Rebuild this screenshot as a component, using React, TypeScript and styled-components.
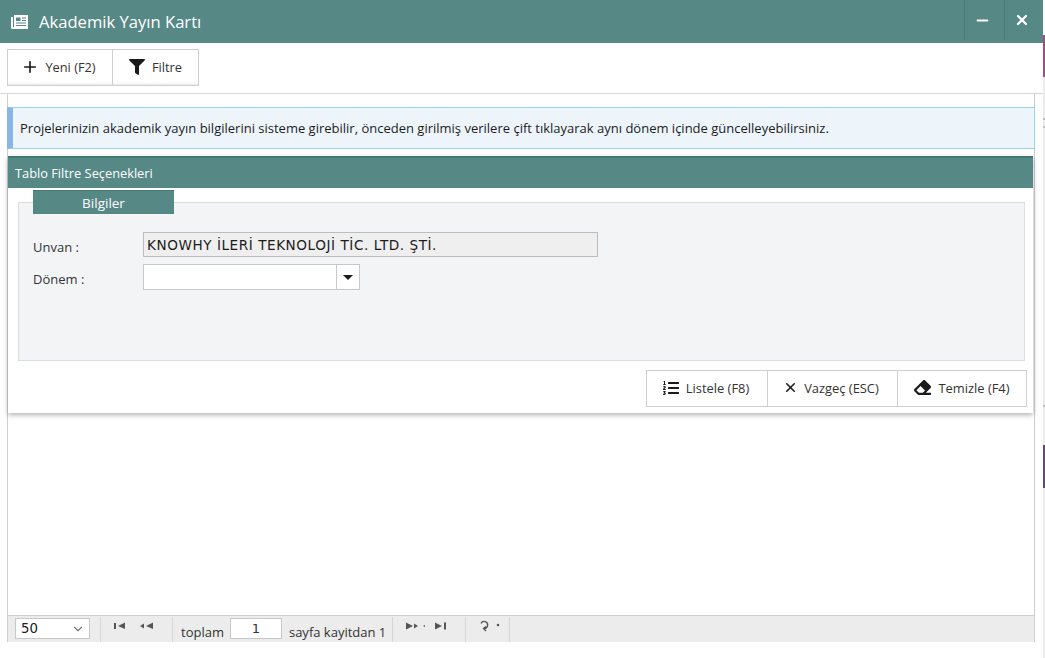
import React from 'react';
import styled, { createGlobalStyle } from 'styled-components';
import { ChevronDown, Minus, Plus, X } from 'lucide-react';
import { FaEraser, FaFilter, FaListOl } from 'react-icons/fa';

const GlobalStyle = createGlobalStyle`
  html, body {
    margin: 0;
    padding: 0;
    background: #fff;
  }
  body {
    font-family: "Open Sans", "Noto Sans", sans-serif;
    color: #222;
  }
  * {
    box-sizing: border-box;
  }
`;

const Page = styled.div`
  width: 1045px;
  height: 658px;
  display: flex;
  overflow: hidden;
  background: #fff;
`;

const Dialog = styled.div`
  width: 1043px;
  height: 658px;
  display: flex;
  flex-direction: column;
`;

const BackdropStrip = styled.div`
  width: 2px;
  height: 658px;
  padding-top: 35px;
`;

const StripSegment = styled.div<{ $color: string; $height: number }>`
  height: ${(p) => p.$height}px;
  background: ${(p) => p.$color};
`;

const TitleBar = styled.header`
  height: 43px;
  flex: none;
  display: flex;
  align-items: stretch;
  justify-content: space-between;
  background: #568886;
  color: #fff;
`;

const TitleGroup = styled.div`
  display: flex;
  align-items: center;
  gap: 11px;
  padding-left: 11px;
  font-size: 16.6px;
`;

const WindowControls = styled.div`
  display: flex;
  height: 40px;
`;

const WindowButton = styled.div<{ $width: number }>`
  width: ${(p) => p.$width}px;
  padding-right: 5px;
  display: flex;
  align-items: center;
  justify-content: center;
  border-left: 1px solid #4c7b79;
`;

const Toolbar = styled.div`
  height: 51px;
  flex: none;
  padding: 6px 0 0 7px;
  border-bottom: 1px solid #d6d6d6;
`;

const ButtonGroup = styled.div`
  display: inline-flex;
  height: 37px;
  border: 1px solid #cfcfcf;
  box-shadow: inset 0 -3px 3px -2px #e6e6e6;
`;

const ToolButton = styled.div<{ $width: number; $gap: number; $nudge: number }>`
  width: ${(p) => p.$width}px;
  padding: 0 ${(p) => p.$nudge}px 2px 0;
  display: flex;
  align-items: center;
  justify-content: center;
  gap: ${(p) => p.$gap}px;
  font-size: 12.8px;
  color: #333;
  & + & {
    border-left: 1px solid #cfcfcf;
  }
`;

const Content = styled.main`
  flex: none;
  height: 548px;
  width: 1028px;
  margin-left: 7px;
  padding-top: 13px;
  border-left: 1px solid #d0d0d0;
  border-right: 1px solid #cdcdcd;
  display: flex;
  flex-direction: column;
`;

const InfoBox = styled.div`
  height: 42px;
  margin-left: -1px;
  display: flex;
  align-items: center;
  padding-left: 7px;
  width: 1028px;
  background: #edf5fb;
  border: 1px solid #93d9e8;
  border-left: 6px solid #8ab6e6;
  font-size: 13px;
  color: #1c1c1c;
`;

const FilterPanel = styled.section`
  width: 1025px;
  height: 257px;
  margin-top: 7px;
  flex: none;
  display: flex;
  flex-direction: column;
  background: #fff;
  box-shadow: 0 2px 5px rgba(0, 0, 0, 0.3);
`;

const PanelHeader = styled.div`
  height: 32px;
  flex: none;
  display: flex;
  align-items: center;
  padding-left: 7px;
  background: #568886;
  border-top: 2px solid #3f7a78;
  color: #fff;
  font-size: 12.8px;
`;

const PanelBody = styled.div`
  flex: 1;
  padding: 2px 8px 0 10px;
  display: flex;
  flex-direction: column;
`;

const LegendTab = styled.div`
  width: 141px;
  height: 24px;
  margin-left: 15px;
  position: relative;
  z-index: 1;
  display: flex;
  align-items: center;
  justify-content: center;
  background: #568886;
  border-top: 1px solid #3f7a78;
  color: #fff;
  font-size: 13.5px;
`;

const FieldGroup = styled.div`
  width: 1007px;
  height: 159px;
  margin-top: -12px;
  padding: 29px 0 0 14px;
  background: #f3f4f6;
  border: 1px solid #dcdcdc;
  display: flex;
  flex-direction: column;
  gap: 7px;
`;

const FieldRow = styled.div`
  display: flex;
  align-items: center;
`;

const FieldLabel = styled.label`
  width: 110px;
  padding-top: 4px;
  font-size: 13px;
  color: #333;
`;

const ReadonlyValue = styled.div`
  width: 455px;
  height: 25px;
  padding-left: 3px;
  display: flex;
  align-items: center;
  background: #efefef;
  border: 1px solid #bdbdbd;
  font-family: "DejaVu Sans", sans-serif;
  font-size: 13.6px;
  letter-spacing: 0.55px;
  color: #1c1c1c;
`;

const SelectBox = styled.div`
  width: 217px;
  height: 26px;
  display: flex;
  justify-content: flex-end;
  background: #fff;
  border: 1px solid #c8c8c8;
`;

const SelectArrow = styled.div`
  width: 23px;
  display: flex;
  align-items: center;
  justify-content: center;
  border-left: 1px solid #c8c8c8;
  &::after {
    content: '';
    border-left: 5px solid transparent;
    border-right: 5px solid transparent;
    border-top: 5px solid #1a1a1a;
  }
`;

const ActionBar = styled.div`
  margin-top: 9px;
  display: flex;
  justify-content: flex-end;
  margin-right: -2px;
`;

const ActionGroup = styled.div`
  display: flex;
  height: 37px;
  border: 1px solid #cfcfcf;
`;

const ActionButton = styled.div<{ $width: number; $gap: number; $nudge: number }>`
  width: ${(p) => p.$width}px;
  padding: 0 ${(p) => p.$nudge}px 2px 0;
  display: flex;
  align-items: center;
  justify-content: center;
  gap: ${(p) => p.$gap}px;
  font-size: 12.9px;
  color: #333;
  & + & {
    border-left: 1px solid #cfcfcf;
  }
`;

const Spacer = styled.div`
  flex: 1;
`;

const Pager = styled.footer`
  height: 27px;
  flex: none;
  display: flex;
  background: #ececec;
  border-top: 1px solid #cfcfcf;
`;

const PagerSection = styled.div<{ $width: number; $indent: number }>`
  width: ${(p) => p.$width}px;
  padding: 1px 0 0 ${(p) => p.$indent}px;
  margin-top: 1px;
  display: flex;
  align-items: flex-start;
  gap: 6px;
  font-size: 13px;
  color: #333;
  border-right: 1px solid #d6d6d6;
`;

const PageSizeSelect = styled.div`
  width: 75px;
  height: 21px;
  padding: 0 4px 0 5px;
  display: flex;
  align-items: center;
  justify-content: space-between;
  background: #fff;
  border: 1px solid #c8c8c8;
  font-family: "DejaVu Sans", sans-serif;
  font-size: 13.3px;
  color: #222;
`;

const PagerIcons = styled.svg`
  display: block;
`;

const PageField = styled.div`
  width: 52px;
  height: 21px;
  margin-right: 1px;
  display: flex;
  align-items: center;
  justify-content: center;
  background: #fff;
  border: 1px solid #c8c8c8;
  font-family: "DejaVu Sans", sans-serif;
  font-size: 13px;
`;

const PagerText = styled.span`
  padding-top: 5px;
`;

const stripSegments = [
  { color: '#a04f80', height: 42 },
  { color: '#ececec', height: 41 },
  { color: '#bdbdbd', height: 2 },
  { color: '#ececec', height: 6 },
  { color: '#c4c4c4', height: 2 },
  { color: '#ececec', height: 277 },
  { color: '#bdbdbd', height: 2 },
  { color: '#ececec', height: 38 },
  { color: '#5f4a72', height: 43 },
  { color: '#ececec', height: 170 },
];

const App = () => {
  return (
    <>
      <GlobalStyle />
      <Page>
        <Dialog>
          <TitleBar>
            <TitleGroup>
              <svg width="17" height="14" viewBox="0 0 17 14">
                <path fill="#fff" d="M3 0h14v14H1.5A1.5 1.5 0 0 1 0 12.5V2h2v10h1z" />
                <path fill="#568886" d="M5 2.5h4.5v3.5H5zM11 2.5h4v1h-4zM11 5h4v1h-4zM5 7.5h10v1H5zM5 10h10v1H5z" />
              </svg>
              <span>Akademik Yayın Kartı</span>
            </TitleGroup>
            <WindowControls>
              <WindowButton $width={40}>
                <Minus size={17} strokeWidth={2.5} />
              </WindowButton>
              <WindowButton $width={39}>
                <X size={16} strokeWidth={3.5} />
              </WindowButton>
            </WindowControls>
          </TitleBar>

          <Toolbar>
            <ButtonGroup>
              <ToolButton $width={104} $gap={6} $nudge={3}>
                <Plus size={18} color="#1a1a1a" strokeWidth={2.2} />
                <span>Yeni (F2)</span>
              </ToolButton>
              <ToolButton $width={86} $gap={7} $nudge={0}>
                <FaFilter size={16} color="#1a1a1a" />
                <span>Filtre</span>
              </ToolButton>
            </ButtonGroup>
          </Toolbar>

          <Content>
            <InfoBox>
              Projelerinizin akademik yayın bilgilerini sisteme girebilir, önceden girilmiş verilere çift tıklayarak aynı dönem içinde güncelleyebilirsiniz.
            </InfoBox>

            <FilterPanel>
              <PanelHeader>Tablo Filtre Seçenekleri</PanelHeader>
              <PanelBody>
                <LegendTab>Bilgiler</LegendTab>
                <FieldGroup>
                  <FieldRow>
                    <FieldLabel>Unvan :</FieldLabel>
                    <ReadonlyValue>KNOWHY İLERİ TEKNOLOJİ TİC. LTD. ŞTİ.</ReadonlyValue>
                  </FieldRow>
                  <FieldRow>
                    <FieldLabel>Dönem :</FieldLabel>
                    <SelectBox>
                      <SelectArrow />
                    </SelectBox>
                  </FieldRow>
                </FieldGroup>
                <ActionBar>
                  <ActionGroup>
                    <ActionButton $width={120} $gap={7} $nudge={2}>
                      <FaListOl size={16} color="#1a1a1a" />
                      <span>Listele (F8)</span>
                    </ActionButton>
                    <ActionButton $width={130} $gap={6} $nudge={3}>
                      <X size={15} color="#1a1a1a" strokeWidth={2.5} />
                      <span>Vazgeç (ESC)</span>
                    </ActionButton>
                    <ActionButton $width={129} $gap={7} $nudge={0}>
                      <FaEraser size={17} color="#1a1a1a" />
                      <span>Temizle (F4)</span>
                    </ActionButton>
                  </ActionGroup>
                </ActionBar>
              </PanelBody>
            </FilterPanel>

            <Spacer />

            <Pager>
              <PagerSection $width={93} $indent={7}>
                <PageSizeSelect>
                  <span>50</span>
                  <ChevronDown size={14} color="#777" />
                </PageSizeSelect>
              </PagerSection>
              <PagerSection $width={72} $indent={13}>
                <PagerIcons width="46" height="14" viewBox="0 0 46 14" fill="#555">
                  <path d="M0 5h2v6H0zM4 8l7-3.5v6.5zM26 8l4-2.5v5zM32 8l7-3.5v6.5z" />
                </PagerIcons>
              </PagerSection>
              <PagerSection $width={220} $indent={8}>
                <PagerText>toplam</PagerText>
                <PageField>1</PageField>
                <PagerText>sayfa kayitdan 1</PagerText>
              </PagerSection>
              <PagerSection $width={73} $indent={13}>
                <PagerIcons width="44" height="14" viewBox="0 0 44 14" fill="#555">
                  <path d="M0 4.5l7 3.5-7 3.5zM8 5.5l4 2.5-4 2.5zM19 7l-2 1 2 1zM29 4.5l7 3.5-7 3.5zM38 4.5h2v7h-2z" />
                </PagerIcons>
              </PagerSection>
              <PagerSection $width={44} $indent={14}>
                <PagerIcons width="28" height="16" viewBox="0 0 28 16" fill="none" stroke="#555" strokeWidth="1.3">
                  <path d="M1 5.5A3.5 3.5 0 1 1 4 10.5M6 8.5L3.5 10.5L6 13" />
                  <circle cx="18" cy="7" r="0.6" fill="#555" />
                </PagerIcons>
              </PagerSection>
            </Pager>
          </Content>
        </Dialog>
        <BackdropStrip>
          {stripSegments.map((s, i) => (
            <StripSegment key={i} $color={s.color} $height={s.height} />
          ))}
        </BackdropStrip>
      </Page>
    </>
  );
};

export default App;
